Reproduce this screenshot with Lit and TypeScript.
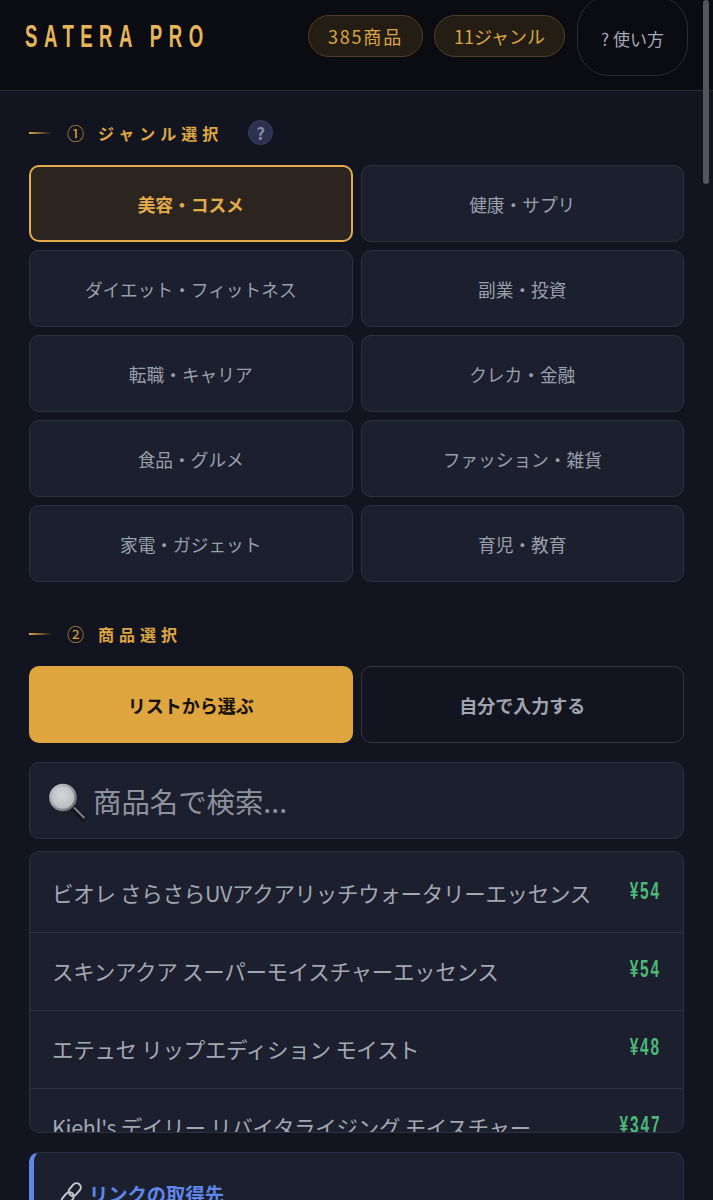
import { LitElement, html, css, svg } from "lit";
import { customElement } from "lit/decorators.js";

const GENRES = ["美容・コスメ","健康・サプリ","ダイエット・フィットネス","副業・投資","転職・キャリア","クレカ・金融","食品・グルメ","ファッション・雑貨","家電・ガジェット","育児・教育"];
const PRODUCTS: [string,string][] = [
  ["ビオレ さらさらUVアクアリッチウォータリーエッセンス","¥54"],
  ["スキンアクア スーパーモイスチャーエッセンス","¥54"],
  ["エテュセ リップエディション モイスト","¥48"],
  ["Kiehl's デイリー リバイタライジング モイスチャー","¥347"],
];

const magnifier = svg`<svg class="mag" viewBox="0 0 38 40" width="38" height="40" aria-hidden="true">
  <defs>
    <radialGradient id="lens" cx="45%" cy="40%" r="65%"><stop offset="0" stop-color="#d6d7da"/><stop offset="1" stop-color="#b4b6ba"/></radialGradient>
    <linearGradient id="rim" x1="0" y1="0" x2="1" y2="1"><stop offset="0" stop-color="#c9cbcf"/><stop offset="1" stop-color="#63666c"/></linearGradient>
  </defs>
  <path d="M24 26 L34.5 36.5" stroke="#14161b" stroke-width="6.5" stroke-linecap="round"/>
  <path d="M25.5 26 L35 35.5" stroke="#7d8087" stroke-width="2" stroke-linecap="round"/>
  <circle cx="14" cy="15.5" r="12.5" fill="url(#lens)" stroke="url(#rim)" stroke-width="2.6"/>
</svg>`;
const link = svg`<svg class="lnk" viewBox="0 0 24 24" width="24" height="24" aria-hidden="true" fill="none" stroke="#c4c6cc" stroke-width="2">
  <rect x="11.5" y="0.5" width="8.5" height="14" rx="4.2" transform="rotate(40 15.7 7.5)"/>
  <rect x="4.5" y="9.5" width="8.5" height="14" rx="4.2" transform="rotate(40 8.7 16.5)"/>
</svg>`;

@customElement("app-root")
export class AppRoot extends LitElement {
  static styles = css`
    :host { display:block; position:relative; height:1200px; overflow:hidden; background:#12151f;
      font-family:"Noto Sans CJK JP","Noto Sans",sans-serif; color:#a6abb6; }
    * { box-sizing:border-box; }
    header { height:91px; background:#0a0c12; border-bottom:1px solid #2c2f38; display:flex; align-items:center; padding:0 25px; position:relative; overflow:hidden; }
    .logo { flex:1 1 0; min-width:0; margin-top:-19px; white-space:nowrap; }
    .logo span { display:inline-block; font-family:"Liberation Sans",sans-serif; font-weight:700; font-size:32px; line-height:36px; letter-spacing:11.2px; color:#e8b55a; transform:scaleX(.58); transform-origin:left center; }
    .pills { display:flex; flex:none; align-items:center; gap:11px; }
    .pill { height:42px; border-radius:21px; border:1.5px solid #4f3f24; background:#241d14; color:#dca544; font-size:18px; display:flex; align-items:center; justify-content:center; margin-top:-19px; }
    .p1 { width:115px; letter-spacing:1.8px; } .p2 { width:131px; margin-right:1px; }
    .help { width:111px; height:80px; padding-top:5px; border-radius:32px; border:1.5px solid #2b2e36; color:#a6abb6; font-size:17px; display:flex; align-items:center; justify-content:center; margin-top:-19px; }
    main { padding:0 29px; }
    .label { display:flex; align-items:center; height:26px; padding-bottom:1px; color:#dfa641; font-weight:700; font-size:16px; letter-spacing:5px; }
    .label .dash { width:23px; height:2px; background:linear-gradient(90deg,#dfa641,rgba(223,166,65,0)); margin-right:15px; }
    .label .num { margin-right:14px; font-weight:400; font-size:17px; letter-spacing:0; }
    .q { width:25px; height:25px; border-radius:50%; background:#2c3150; border:1px solid #3b4064; color:#858aa6; display:flex; align-items:center; justify-content:center; font-size:17px; letter-spacing:0; margin-left:25px; }
    .l1 { margin-top:29px; }
    .l2 { margin-top:39px; }
    .grid { display:grid; grid-template-columns:1fr 1fr; gap:8px; margin-top:19px; grid-auto-rows:77px; }
    .cell { background:#1b1f2e; border:1.5px solid #2d3140; border-radius:10px; display:flex; align-items:center; justify-content:center; font-size:17.7px; color:#9a9fab; }
    .cell.on { background:#2c251f; border:2px solid #e3ab4a; color:#e3ab4a; font-weight:700; }
    .tab { border-radius:10px; display:flex; align-items:center; justify-content:center; font-size:18px; font-weight:700; }
    .tab.on { background:#dfa53f; color:#14110a; }
    .tab.off { background:#12151f; border:1.5px solid #323642; color:#a0a4ae; }
    .search { margin-top:19px; height:77px; background:#1b1f2e; border:1.5px solid #2d3140; border-radius:10px; display:flex; align-items:center; padding:0 19px; font-size:28.4px; color:#8e929c; gap:6px; }
    .mag { flex:none; margin-top:3px; }
    .list { margin-top:12px; height:282px; padding-top:3px; background:#1b1f2e; border:1.5px solid #2d3140; border-radius:10px; overflow:hidden; }
    .row { height:78px; display:flex; align-items:center; justify-content:space-between; padding:0 23px 2px 22px; border-bottom:1.5px solid #2d3140; font-size:21.5px; color:#a3a7b1; white-space:nowrap; }
    .row .name { letter-spacing:-.3px; }
    .row .price { display:inline-block; font-family:"Liberation Sans",sans-serif; font-weight:700; font-size:24px; letter-spacing:3px; margin-right:-1px; color:#4cb877; margin-top:-3px; transform:scaleX(.64); transform-origin:right center; }
    .info { margin-top:19px; height:120px; background:#1b1f2e; border:1.5px solid #2b3048; border-left:5px solid #5f86e8; border-radius:10px; padding:27px 20px 0 25px; display:flex; align-items:flex-start; gap:6px; color:#5f86e8; font-weight:700; font-size:19.3px; }
    .lnk { flex:none; margin-top:2px; }
    .thumb { position:absolute; right:4px; top:0; width:6px; height:184px; background:#54565c; border-radius:3px; }
  `;
  render() {
    return html`
      <header>
        <div class="logo"><span>SATERA PRO</span></div>
        <div class="pills">
          <div class="pill p1">385商品</div>
          <div class="pill p2">11ジャンル</div>
          <div class="help">? 使い方</div>
        </div>
      </header>
      <main>
        <div class="label l1"><span class="dash"></span><span class="num">①</span>ジャンル選択<span class="q">?</span></div>
        <div class="grid">
          ${GENRES.map((g,i)=>html`<div class="cell ${i===0?"on":""}">${g}</div>`)}
        </div>
        <div class="label l2"><span class="dash"></span><span class="num">②</span>商品選択</div>
        <div class="grid">
          <div class="tab on">リストから選ぶ</div>
          <div class="tab off">自分で入力する</div>
        </div>
        <div class="search">${magnifier}<span>商品名で検索...</span></div>
        <div class="list">
          ${PRODUCTS.map(([n,p])=>html`<div class="row"><span class="name">${n}</span><span class="price">${p}</span></div>`)}
        </div>
        <div class="info">${link}<span>リンクの取得先</span></div>
      </main>
      <div class="thumb"></div>
    `;
  }
}
